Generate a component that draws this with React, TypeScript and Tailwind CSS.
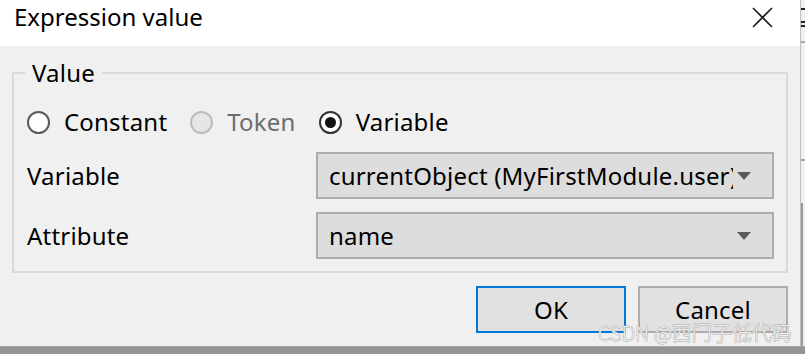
import React from 'react';

type RadioProps = {
  label: string;
  checked?: boolean;
  disabled?: boolean;
};

function Radio({ label, checked, disabled }: RadioProps) {
  const ring = disabled
    ? 'border-[#bcbcbc] bg-[#e6e6e6]'
    : checked
      ? 'border-[#333333] bg-white'
      : 'border-[#5a5a5a] bg-white';
  return (
    <div className="flex items-center">
      <span className={`flex h-[23px] w-[23px] items-center justify-center rounded-full border-[2px] ${ring}`}>
        {checked && <span className="h-[11px] w-[11px] rounded-full bg-[#111111]" />}
      </span>
      <span className={`ml-[14px] ${disabled ? 'text-[#6d6d6d]' : 'text-black'}`}>{label}</span>
    </div>
  );
}

function Select({ value }: { value: string }) {
  return (
    <div className="flex h-[47px] w-[458px] items-center border-[2px] border-[#adadad] bg-[#dddddd] pl-[11px] pr-[21px]">
      <span className="flex-1 overflow-hidden whitespace-nowrap">{value}</span>
      <svg width="14" height="8" viewBox="0 0 14 8" className="ml-[4px] shrink-0">
        <polygon points="0,0 14,0 7,8" fill="#5a5a5a" />
      </svg>
    </div>
  );
}

export default function App() {
  return (
    <div className="relative h-[354px] w-[805px] overflow-hidden bg-[#949494] font-['Noto_Sans','Liberation_Sans',sans-serif] text-[24px] leading-[30px] tracking-[0.2px] text-black">
      <div className="flex h-[346px]">
        <div className="flex w-[800px] flex-col">
          {/* title bar */}
          <div className="flex h-[46px] items-center justify-between bg-white pl-[14px] pr-[27px]">
            <span className="mt-[-13px] tracking-normal">Expression value</span>
            <svg width="21" height="21" viewBox="0 0 21 21" className="mt-[-11px]">
              <path d="M1 1 L20 20 M20 1 L1 20" stroke="#1a1a1a" strokeWidth="1.6" />
            </svg>
          </div>

          {/* body */}
          <div className="flex flex-1 flex-col bg-[#f0f0f0] px-[12px]">
            <fieldset className="mt-[12px] border-[2px] border-[#dadada] pb-[12px] pl-[11px] pr-[12px]">
              <legend className="px-[7px]">Value</legend>
              <div className="mt-[19px] flex h-[30px] items-center gap-[23px] pl-[2px]">
                <Radio label="Constant" />
                <Radio label="Token" disabled />
                <Radio label="Variable" checked />
              </div>
              <div className="mt-[15px] flex items-center">
                <span className="w-[291px] pl-[2px]">Variable</span>
                <Select value="currentObject (MyFirstModule.user)" />
              </div>
              <div className="mt-[13px] flex items-center">
                <span className="w-[291px] pl-[2px]">Attribute</span>
                <Select value="name" />
              </div>
            </fieldset>

            <div className="mt-[13px] flex justify-end gap-[12px]">
              <button className="h-[47px] w-[150px] border-[2px] border-[#0078d7] bg-[#e1e1e1]">OK</button>
              <button className="h-[47px] w-[150px] border-[2px] border-[#adadad] bg-[#e1e1e1]">Cancel</button>
            </div>
          </div>
        </div>

        {/* window edge behind the dialog */}
        <div className="flex w-[5px] flex-col border-l border-[#bdbdbd] bg-[#f0f0f0]">
          <div className="mt-[8px] h-[2px] bg-[#222222]" />
          <div className="mt-[11px] h-[2px] bg-[#222222]" />
          <div className="mt-[2px] h-[2px] bg-[#222222]" />
          <div className="mt-[14px] h-[2px] bg-[#aaaaaa]" />
          <div className="mt-[116px] h-[2px] bg-[#aaaaaa]" />
          <div className="mt-[42px] w-[2px] flex-1 bg-[#9a9a9a]" />
        </div>
      </div>
      <div className="h-[1px] bg-[#a6a6a6]" />

      {/* watermark */}
      <span className="pointer-events-none absolute left-[598px] top-[321px] font-['Noto_Sans_CJK_SC',sans-serif] text-[20px] font-light leading-[24px] tracking-normal text-[#fafafa]/85 [-webkit-text-stroke:1px_#b0b0b0] [paint-order:stroke_fill]">
        CSDN @西门子低代码
      </span>
    </div>
  );
}
